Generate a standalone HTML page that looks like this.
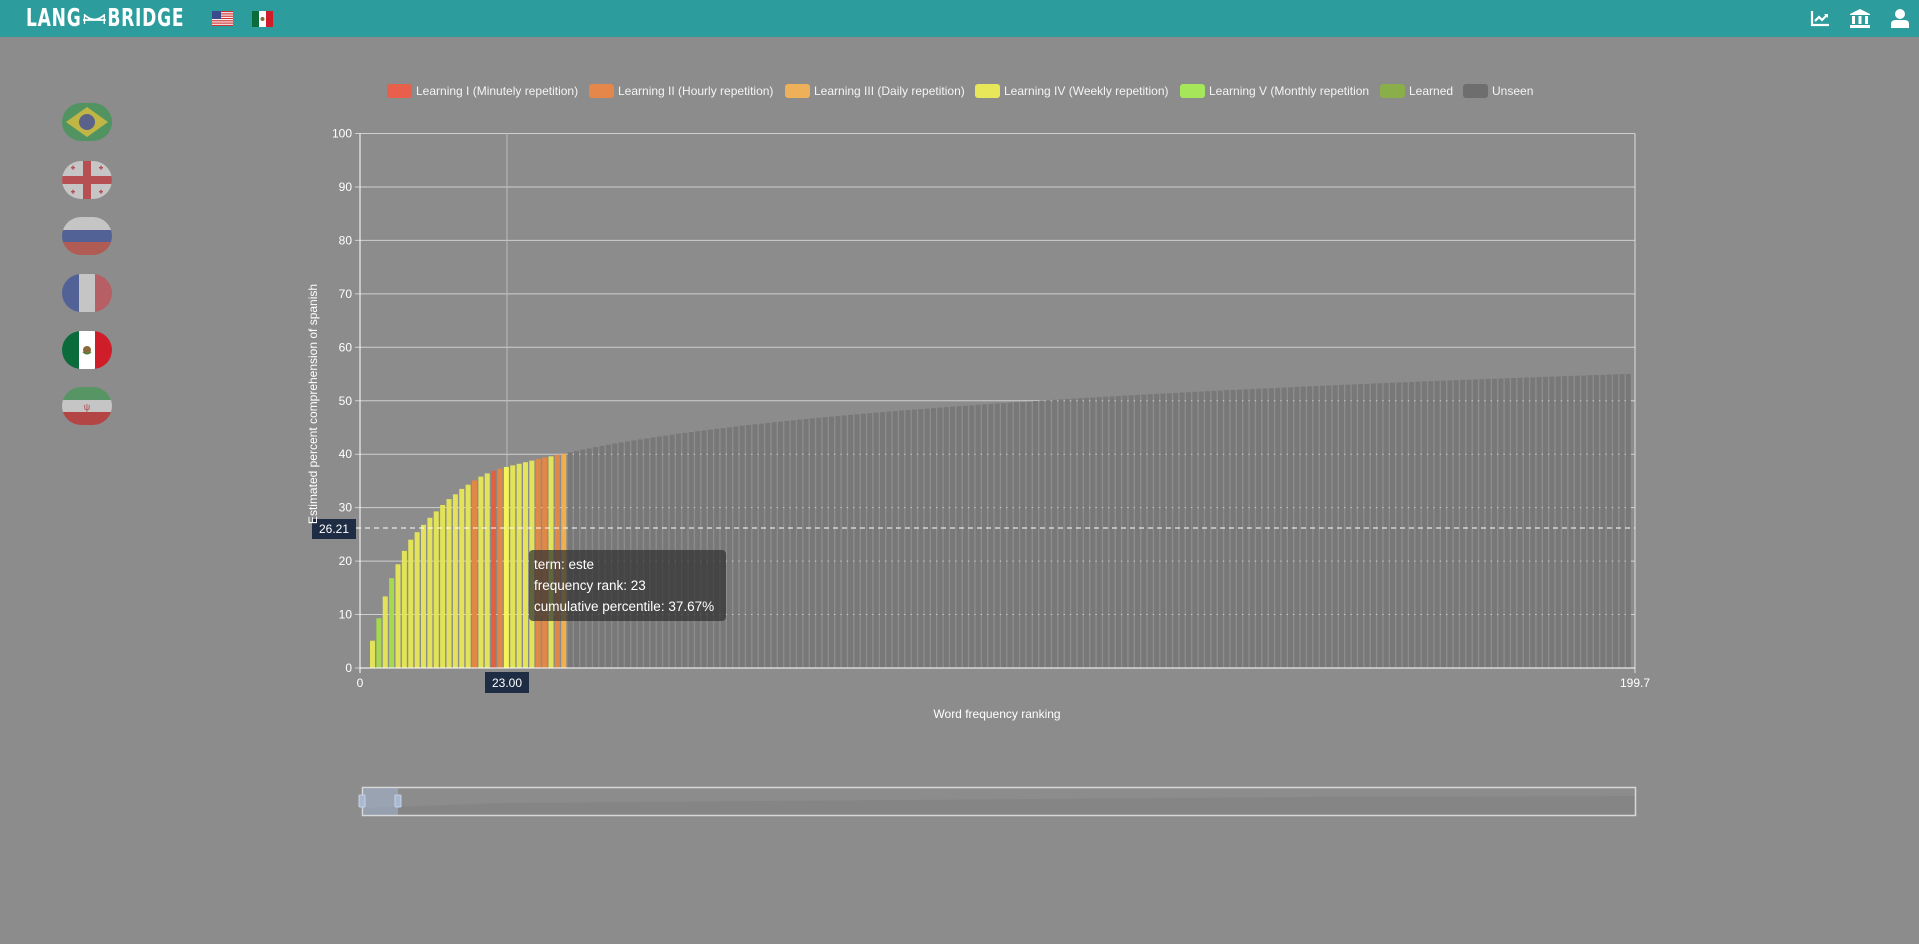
<!DOCTYPE html>
<html><head><meta charset="utf-8"><style>
html,body{margin:0;padding:0;width:1919px;height:944px;background:#8c8c8c;overflow:hidden;font-family:"Liberation Sans",sans-serif}
.hdr{position:absolute;left:0;top:0;width:1919px;height:37px;background:#2c9c9c}
.logo{position:absolute;left:26px;top:3px;color:#fff;font-size:25px;font-weight:bold;letter-spacing:1px;transform:scaleX(.76);transform-origin:left;font-family:"DejaVu Sans Condensed","Liberation Sans Narrow",sans-serif}
.flag{position:absolute;left:62px;width:50px;height:38px;border-radius:19px/19px;overflow:hidden;opacity:.5}
</style></head><body>
<div class="hdr">
 <div class="logo">LANG<svg width="34" height="16" viewBox="0 0 34 16" style="vertical-align:0"><path d="M2 10H32M4 4V14M30 4V14M4 5Q17 14 30 5M10 8V10M17 9V10M24 8V10" stroke="#fff" stroke-width="1.8" fill="none"/></svg>BRIDGE</div>
 <svg style="position:absolute;left:212px;top:11px" width="21" height="15" viewBox="0 0 21 15"><rect width="21" height="15" fill="#fff"/><g fill="#c33"><rect y="0" width="21" height="1.2"/><rect y="2.3" width="21" height="1.2"/><rect y="4.6" width="21" height="1.2"/><rect y="6.9" width="21" height="1.2"/><rect y="9.2" width="21" height="1.2"/><rect y="11.5" width="21" height="1.2"/><rect y="13.8" width="21" height="1.2"/></g><rect width="9" height="8" fill="#3b4a8a"/></svg>
 <svg style="position:absolute;left:252px;top:11px" width="21" height="16" viewBox="0 0 21 16"><rect width="7" height="16" fill="#0b6b3a"/><rect x="7" width="7" height="16" fill="#fff"/><rect x="14" width="7" height="16" fill="#cf1e2a"/><circle cx="10.5" cy="8" r="2" fill="#8a6a3a"/></svg>
 <svg style="position:absolute;left:1810px;top:10px" width="20" height="17" viewBox="0 0 20 17"><path d="M2 1V15H19" stroke="#fff" stroke-width="2.2" fill="none"/><path d="M5 11L9 7L12 10L17 5" stroke="#fff" stroke-width="2.2" fill="none"/><path d="M14 4H18V8Z" fill="#fff"/></svg>
 <svg style="position:absolute;left:1850px;top:9px" width="20" height="19" viewBox="0 0 20 19"><path d="M10 0L20 5V6H0V5Z" fill="#fff"/><rect x="2" y="7" width="3" height="8" fill="#fff"/><rect x="8.5" y="7" width="3" height="8" fill="#fff"/><rect x="15" y="7" width="3" height="8" fill="#fff"/><rect x="0" y="16" width="20" height="3" fill="#fff"/></svg>
 <svg style="position:absolute;left:1891px;top:9px" width="18" height="19" viewBox="0 0 18 19"><circle cx="9" cy="5" r="5" fill="#fff"/><path d="M0 19V15Q0 11 5 11H13Q18 11 18 15V19Z" fill="#fff"/></svg>
</div>

<div class="flag" style="top:103px"><svg width="50" height="38"><rect width="50" height="38" fill="#1a9b3a"/><path d="M25 4L46 19L25 34L4 19Z" fill="#f7e000"/><circle cx="25" cy="19" r="8" fill="#2a3a8a"/></svg></div>
<div class="flag" style="top:161px"><svg width="50" height="38"><rect width="50" height="38" fill="#fff"/><rect x="21" width="8" height="38" fill="#e0141e"/><rect y="15" width="50" height="8" fill="#e0141e"/><g fill="#e0141e"><rect x="9" y="6" width="4" height="1.4"/><rect x="10.3" y="4.7" width="1.4" height="4"/><rect x="37" y="6" width="4" height="1.4"/><rect x="38.3" y="4.7" width="1.4" height="4"/><rect x="9" y="30" width="4" height="1.4"/><rect x="10.3" y="28.7" width="1.4" height="4"/><rect x="37" y="30" width="4" height="1.4"/><rect x="38.3" y="28.7" width="1.4" height="4"/></g></svg></div>
<div class="flag" style="top:217px"><svg width="50" height="38"><rect width="50" height="13" fill="#fff"/><rect y="13" width="50" height="12" fill="#1a3aa0"/><rect y="25" width="50" height="13" fill="#d52b1e"/></svg></div>
<div class="flag" style="top:274px"><svg width="50" height="38"><rect width="17" height="38" fill="#1a3aa0"/><rect x="17" width="16" height="38" fill="#fff"/><rect x="33" width="17" height="38" fill="#e0333e"/></svg></div>
<div class="flag" style="top:331px;opacity:1"><svg width="50" height="38"><rect width="17" height="38" fill="#0b6b3a"/><rect x="17" width="16" height="38" fill="#fff"/><rect x="33" width="17" height="38" fill="#cf1e2a"/><circle cx="25" cy="19" r="4" fill="#8a6a3a"/><path d="M21 21Q25 25 29 21" stroke="#3a8a3a" fill="none"/></svg></div>
<div class="flag" style="top:387px"><svg width="50" height="38"><rect width="50" height="13" fill="#239f40"/><rect y="13" width="50" height="12" fill="#fff"/><rect y="25" width="50" height="13" fill="#da0000"/><text x="25" y="23" font-size="9" fill="#da0000" text-anchor="middle">ψ</text></svg></div>

<svg id="ch" style="position:absolute;left:0;top:0" width="1919" height="944"></svg>

<div style="position:absolute;left:529px;top:550px;width:197px;height:71px;background:rgba(50,50,50,.72);border-radius:4px;color:#fff;font-size:13.5px;line-height:21px;padding:4px 5px;box-sizing:border-box">term: este<br>frequency rank: 23<br>cumulative percentile: 37.67%</div>

<script>
var s='',Y0=668,K=5.345,L=360,R=1635;
function y(v){return Y0-v*K}
var lg=[[387,'#e8604c','Learning I (Minutely repetition)'],[589,'#e5874b','Learning II (Hourly repetition)'],[785,'#efb05a','Learning III (Daily repetition)'],[975,'#e8e75a','Learning IV (Weekly repetition)'],[1180,'#a6e65a','Learning V (Monthly repetition'],[1380,'#8aaf4a','Learned'],[1463,'#6e6e6e','Unseen']];
lg.forEach(function(a){s+='<rect x="'+a[0]+'" y="84" width="25" height="14" rx="3" fill="'+a[1]+'"/><text x="'+(a[0]+29)+'" y="95" font-size="12" fill="#f4f4f4">'+a[2]+'</text>'});
for(var i=0;i<=10;i++){var yy=y(i*10);s+='<line x1="'+(L-5)+'" x2="'+R+'" y1="'+yy+'" y2="'+yy+'" stroke="#cfcfcf" stroke-width="1"/>';s+='<text x="352" y="'+(yy+4)+'" font-size="12" fill="#fff" text-anchor="end">'+(i*10)+'</text>'}
s+='<line x1="'+R+'" x2="'+R+'" y1="'+y(100)+'" y2="'+(Y0+5)+'" stroke="#ddd"/>';
s+='<line x1="'+L+'" x2="'+L+'" y1="'+y(100)+'" y2="'+(Y0+5)+'" stroke="#fff"/>';
s+='<line x1="507" x2="507" y1="'+y(100)+'" y2="'+Y0+'" stroke="#bbb"/>';
var v=[5.1,9.3,13.4,16.8,19.4,21.9,24,25.4,26.8,28.1,29.3,30.5,31.6,32.5,33.5,34.3,35.1,35.8,36.4,36.9,37.3,37.6,37.9,38.2,38.5,38.8,39.1,39.4,39.6,39.9,40.1];
var c='YGYGYYYYYYYYYYYYOYYROBYYYYOOYOL';
var cm={Y:'#e3e35a',G:'#a5d94e',O:'#e08848',R:'#e06040',B:'#f4f45a',L:'#f0b050'};
for(var j=0;j<199;j++){var x=370+6.375*j;if(x+5>R)break;var val,col;
 if(j<31){val=v[j];col=cm[c[j]]}else{val=40.1+15*Math.log(j/30)/Math.log(199/30);col='#787878'}
 s+='<rect x="'+x.toFixed(2)+'" y="'+y(val).toFixed(1)+'" width="5" height="'+(val*K).toFixed(1)+'" fill="'+col+'"/>'}
s+='<line x1="'+L+'" x2="'+R+'" y1="'+Y0+'" y2="'+Y0+'" stroke="#fff"/>';
s+='<line x1="356" x2="'+R+'" y1="528" y2="528" stroke="#fff" stroke-dasharray="5,4"/>';
s+='<rect x="312" y="519" width="44" height="20" fill="#1f2d44"/><text x="334" y="533" font-size="12" fill="#fff" text-anchor="middle">26.21</text>';
s+='<rect x="485" y="672" width="44" height="21" fill="#1f2d44"/><text x="507" y="687" font-size="12" fill="#fff" text-anchor="middle">23.00</text>';
s+='<text x="360" y="687" font-size="12" fill="#fff" text-anchor="middle">0</text><text x="1635" y="687" font-size="12" fill="#fff" text-anchor="middle">199.7</text>';
s+='<text x="997" y="718" font-size="12" fill="#fff" text-anchor="middle">Word frequency ranking</text>';
s+='<text transform="translate(317,404) rotate(-90)" font-size="12" fill="#fff" text-anchor="middle">Estimated percent comprehension of spanish</text>';
s+='<path d="M363 808L500 803L900 800L1300 797L1635 796V815H363Z" fill="#858585"/>';
s+='<rect x="362.5" y="787.5" width="1273" height="28" fill="none" stroke="#d8d8d8" stroke-width="1.5"/>';
s+='<rect x="363" y="788" width="35" height="27" fill="rgba(165,185,215,.5)"/>';
s+='<rect x="359" y="795" width="6" height="12" rx="1" fill="#a9b9d1" stroke="#c5d2e6"/><rect x="395" y="795" width="6" height="12" rx="1" fill="#a9b9d1" stroke="#c5d2e6"/>';
document.getElementById('ch').innerHTML=s;
</script>
</body></html>
